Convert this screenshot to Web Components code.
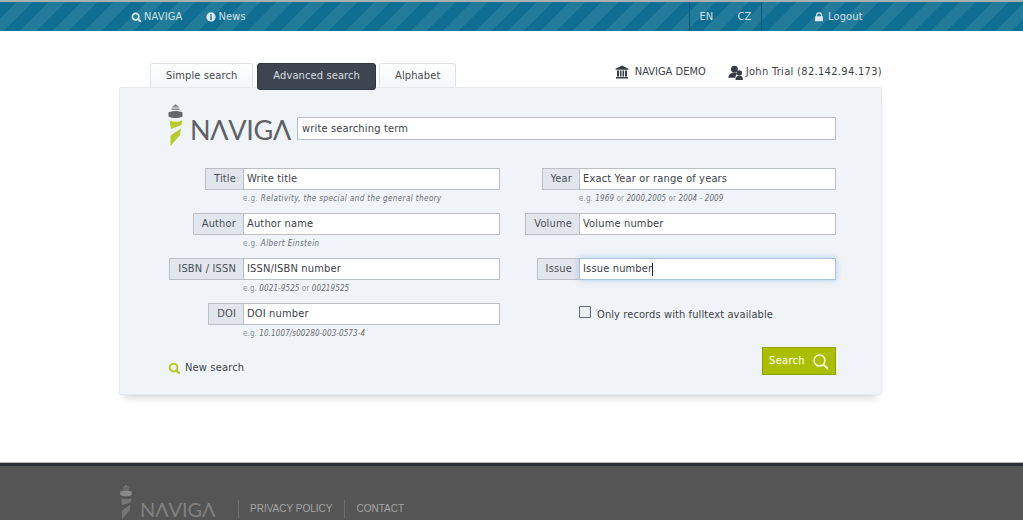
<!DOCTYPE html>
<html>
<head>
<meta charset="utf-8">
<title>NAVIGA</title>
<style>
html, body { margin: 0; padding: 0; background: #fff; }
body { font: 11px/1.2 "DejaVu Sans Condensed", "DejaVu Sans", sans-serif; font-stretch: condensed; letter-spacing: .16px; color: #3c4248; height: 520px; overflow: hidden; }
.num { --help-ls: .1px; }
</style>
</head>
<body>
<top-bar></top-bar>
<page-wrap>
  <search-head></search-head>
  <search-panel>
    <field-row slot="left" label="Title" value="Write title"><i>Relativity, the special and the general theory</i></field-row>
    <field-row slot="left" label="Author" value="Author name"><i>Albert Einstein</i></field-row>
    <field-row class="num" slot="left" label="ISBN / ISSN" value="ISSN/ISBN number"><i>0021-9525</i> or <i>00219525</i></field-row>
    <field-row class="num" slot="left" label="DOI" value="DOI number"><i>10.1007/s00280-003-0573-4</i></field-row>
    <field-row class="num" slot="right" label="Year" value="Exact Year or range of years"><i>1969</i> or <i>2000,2005</i> or <i>2004 - 2009</i></field-row>
    <field-row slot="right" label="Volume" value="Volume number" nohelp></field-row>
    <field-row slot="right" label="Issue" value="Issue number" focused nohelp></field-row>
  </search-panel>
</page-wrap>
<site-footer></site-footer>

<script>
const ICONS = {
  search: '<circle cx="6.500" cy="6.500" r="4.500" fill="none" stroke="currentColor" stroke-width="2.400"/><path d="M10 10l4 4" stroke="currentColor" stroke-width="2.800" stroke-linecap="round"/>',
  info: '<circle cx="7" cy="7" r="6.500" fill="currentColor"/><rect x="6" y="6" width="2" height="5" fill="#13708f"/><rect x="6" y="3" width="2" height="2" fill="#13708f"/>',
  lock: '<path d="M3.600 6.500V4.600a3.400 3.400 0 0 1 6.800 0v1.900" fill="none" stroke="currentColor" stroke-width="1.500"/><rect x="1.500" y="6" width="11" height="7" rx=".8" fill="currentColor"/>',
  bank: '<path d="M7 .6L13.400 3.800v1H.6v-1zM1 12h12v1.600H1zM2 5.600h2v5.800H2zM4.900 5.600h1.600v5.800H4.900zM7.500 5.600h1.600v5.800H7.500zM10 5.600h2v5.800h-2z" fill="currentColor"/>',
  users: '<circle cx="6" cy="4" r="3.200" fill="currentColor"/><path d="M.4 11.800c0-3 2.200-4.500 5.600-4.500 1.400 0 2.200.3 2.800.8-1.100.6-1.800 1.700-1.800 3.700z" fill="currentColor"/><circle cx="10.600" cy="7.400" r="2.500" fill="currentColor"/><path d="M7 14c0-2.800 1.400-3.900 3.600-3.900S14 11.200 14 14z" fill="currentColor"/>'
};
const icon = (name, size) => `<svg width="${size}" height="${size}" viewBox="0 0 14 14" aria-hidden="true">${ICONS[name]}</svg>`;

class LogoMark extends HTMLElement {
  connectedCallback() {
    const dark = this.hasAttribute('dark');
    const tower = dark ? '#777' : '#85888c';
    const lens = dark ? '#8a8a8a' : '#63666a';
    const body = dark ? '#777' : '#b7cc2a';
    const word = dark ? '#808080' : '#5d6166';
    const w = dark ? 14 : 17;
    const h = dark ? 36 : 44;
    this.attachShadow({ mode: 'open' }).innerHTML = `
      <style>
        :host { display: inline-flex; align-items: flex-end; height: ${h}px; }
        svg { display: block; flex: none; }
        span { font: 400 ${dark ? 20 : 27}px/1 Lato, "Noto Sans", sans-serif; font-stretch: normal; letter-spacing: ${dark ? -.1 : -.3}px; color: ${word};
          margin: 0 0 ${dark ? 1 : 4}px ${dark ? 7 : 6}px; white-space: nowrap; }
      </style>
      <svg width="${w}" height="${h}" viewBox="0 0 17 44">
        <path d="M8.500 1l4 3.500h-8zM4.500 5.500h8v1.500h-8z" fill="${tower}"/>
        <path d="M1.500 9.500c4-2 10-2 14 0v4c-4 2-10 2-14 0z" fill="${lens}"/>
        <path d="M2.500 17.500Q9 20 15 17.500L14.500 22 4 26z" fill="${body}"/>
        <path d="M14 25.500L13 32 3.500 43 3.500 32.500z" fill="${body}"/>
      </svg>
      <span>NΛVIGΛ</span>`;
  }
}

class TopBar extends HTMLElement {
  connectedCallback() {
    this.attachShadow({ mode: 'open' }).innerHTML = `
      <style>
        :host { display: block; height: 29px; border-top: 2px solid #a9b0b2; color: #cfe0e6;
          background: repeating-linear-gradient(135deg, #0f6e92 0 11.500px, #237b9b 11.500px 23px); }
        .in { display: flex; align-items: center; height: 29px; width: 763px; margin-left: 119px; }
        a { display: flex; align-items: center; gap: 3px; }
        svg { color: #dbe8ec; }
        .lang { display: flex; align-items: center; justify-content: center; gap: 24px; height: 29px; width: 73px; margin-left: 443px;
          border-left: 1px solid #0c5a78; border-right: 1px solid #0c5a78; box-sizing: border-box; }
        .news { margin-left: 23px; }
        .nav { margin-left: 12px; }
        .out { margin-left: 52px; gap: 4px; }
      </style>
      <div class="in">
        <a class="nav">${icon('search', 10)}NAVIGA</a>
        <a class="news">${icon('info', 10)}News</a>
        <div class="lang"><a>EN</a><a>CZ</a></div>
        <a class="out">${icon('lock', 10)}Logout</a>
      </div>`;
  }
}

class PageWrap extends HTMLElement {
  connectedCallback() {
    this.attachShadow({ mode: 'open' }).innerHTML = `
      <style>:host { display: block; width: 763px; margin: 32px 0 0 119px; height: 400px; }</style>
      <slot></slot>`;
  }
}

class SearchHead extends HTMLElement {
  connectedCallback() {
    this.attachShadow({ mode: 'open' }).innerHTML = `
      <style>
        :host { display: flex; height: 24px; position: relative; z-index: 1; letter-spacing: .12px; }
        .tabs { display: flex; gap: 4px; margin-left: 31px; align-items: flex-start; }
        .tab { box-sizing: border-box; height: 24px; padding: 5px 15px 0; border: 1px solid #dfe3e7; border-bottom: 0; border-radius: 3px 3px 0 0;
          background: linear-gradient(#fff, #f4f6f8); color: #444a50; white-space: nowrap; }
        .on { height: 27px; padding-top: 5px; background: #3d4650; color: #d8dde2; border: 1px solid #2e3640; border-radius: 3px; }
        .on + .tab { margin-left: -1px; }
        .who { margin-left: auto; display: flex; align-items: center; height: 18px; }
        .who span { display: flex; align-items: center; gap: 6px; white-space: nowrap; letter-spacing: 0; }
        .who span + span { margin-left: 22px; gap: 3px; letter-spacing: .32px; }
        svg { color: #373d44; }
      </style>
      <div class="tabs">
        <div class="tab">Simple search</div>
        <div class="tab on">Advanced search</div>
        <div class="tab">Alphabet</div>
      </div>
      <div class="who">
        <span>${icon('bank', 14)}NAVIGA DEMO</span>
        <span>${icon('users', 15)}John Trial (82.142.94.173)</span>
      </div>`;
  }
}

class FieldRow extends HTMLElement {
  connectedCallback() {
    const label = this.getAttribute('label');
    const value = this.getAttribute('value');
    const focused = this.hasAttribute('focused');
    this.attachShadow({ mode: 'open' }).innerHTML = `
      <style>
        :host { display: block; height: 45px; box-sizing: border-box; }
        .group { display: flex; justify-content: flex-end; height: 22px; }
        .lab { box-sizing: border-box; display: flex; align-items: center; padding: 0 7px 0 8px; background: #e1e5ec; color: #4a5057;
          border: 1px solid #b9bfc4; border-right: 0; white-space: nowrap; }
        .val { box-sizing: border-box; width: 257px; display: flex; align-items: center; padding-left: 3px; background: #fff; color: #3c4248;
          border: 1px solid #b9bfc4; white-space: nowrap; }
        .focus { border-color: #a9c3dc; box-shadow: 0 0 6px rgba(120,170,225,.55); }
        .caret { display: inline-block; width: 1px; height: 13px; background: #222; }
        .help { margin: 3px 0 0 auto; width: 257px; box-sizing: border-box; font-size: 8px; line-height: 11px; color: #8f959b; letter-spacing: var(--help-ls, .4px); }
        ::slotted(i) { color: #666b70; }
      </style>
      <div class="group">
        <div class="lab">${label}</div>
        <div class="val ${focused ? 'focus' : ''}">${value}${focused ? '<span class="caret"></span>' : ''}</div>
      </div>
      ${this.hasAttribute('nohelp') ? '' : '<div class="help">e.g. <slot></slot></div>'}`;
  }
}

class SearchPanel extends HTMLElement {
  connectedCallback() {
    this.attachShadow({ mode: 'open' }).innerHTML = `
      <style>
        :host { display: block; box-sizing: border-box; height: 308px; padding: 15px 45px 0 47px; background: #f0f3f7;
          border: 1px solid #e6e9ed; border-radius: 2px; box-shadow: 0 7px 8px -5px rgba(0,0,0,.2); }
        .top { display: flex; align-items: flex-end; height: 44px; }
        .main { box-sizing: border-box; flex: 1; height: 23px; margin: 0 0 7px 0; padding-left: 4px; display: flex; align-items: center;
          background: #fff; border: 1px solid #b9bfc4; color: #3c4248; }
        logo-mark { width: 130px; }
        .cols { display: grid; grid-template-columns: 333px 332px; gap: 0 4px; margin-top: 21px; }
        .foot-left { display: flex; align-items: center; gap: 5px; margin: 13px 0 0 1px; color: #3c4248; }
        .foot-left svg { color: #b7cc2a; }
        .check { display: flex; align-items: center; margin: 0 0 0 75px; height: 45px; padding-bottom: 22px; box-sizing: border-box; white-space: nowrap; letter-spacing: .1px; }
        .box { width: 10px; height: 10px; border: 1px solid #5a6a78; border-radius: 1px; background: #e9eef2; margin: -5px 6px 0 0; }
        .btn { display: flex; align-items: center; justify-content: center; gap: 7px; box-sizing: border-box; width: 74px; height: 28px; margin: -1px 0 0 258px;
          background: #a9bf00; border: 1px solid #8da000; color: #f4f8d8; -webkit-text-stroke: .25px #f4f8d8; letter-spacing: .3px; }
        .btn svg { color: #f4f8d8; }
      </style>
      <div class="top">
        <logo-mark></logo-mark>
        <div class="main">write searching term</div>
      </div>
      <div class="cols">
        <div>
          <slot name="left"></slot>
          <div class="foot-left">${icon('search', 12)}New search</div>
        </div>
        <div>
          <slot name="right"></slot>
          <div class="check"><span class="box"></span>Only records with fulltext available</div>
          <div class="btn">Search <svg width="17" height="17" viewBox="0 0 17 17"><circle cx="7.500" cy="7.500" r="5.500" fill="none" stroke="currentColor" stroke-width="1.600"/><path d="M11.500 11.500l4.500 4.500" stroke="currentColor" stroke-width="2"/></svg></div>
        </div>
      </div>`;
  }
}

class SiteFooter extends HTMLElement {
  connectedCallback() {
    this.attachShadow({ mode: 'open' }).innerHTML = `
      <style>
        :host { display: block; height: 54px; overflow: hidden; background: #555; border-top: 3px solid #2d3137; box-shadow: 0 -1px 0 #b5b5b5; color: #a6a6a6; }
        .in { display: flex; align-items: flex-start; margin: 18px 0 0 119px; }
        logo-mark { width: 119px; }
        .links { display: flex; align-items: center; height: 18px; margin-top: 16px; font: 10px "Liberation Sans", sans-serif; letter-spacing: 0; }
        .links a { padding: 0 12px 0 11px; border-left: 1px solid #6e6e6e; line-height: 18px; white-space: nowrap; }
      </style>
      <div class="in">
        <logo-mark dark></logo-mark>
        <div class="links"><a>PRIVACY POLICY</a><a>CONTACT</a></div>
      </div>`;
  }
}

customElements.define('logo-mark', LogoMark);
customElements.define('top-bar', TopBar);
customElements.define('page-wrap', PageWrap);
customElements.define('search-head', SearchHead);
customElements.define('field-row', FieldRow);
customElements.define('search-panel', SearchPanel);
customElements.define('site-footer', SiteFooter);
</script>
</body>
</html>
